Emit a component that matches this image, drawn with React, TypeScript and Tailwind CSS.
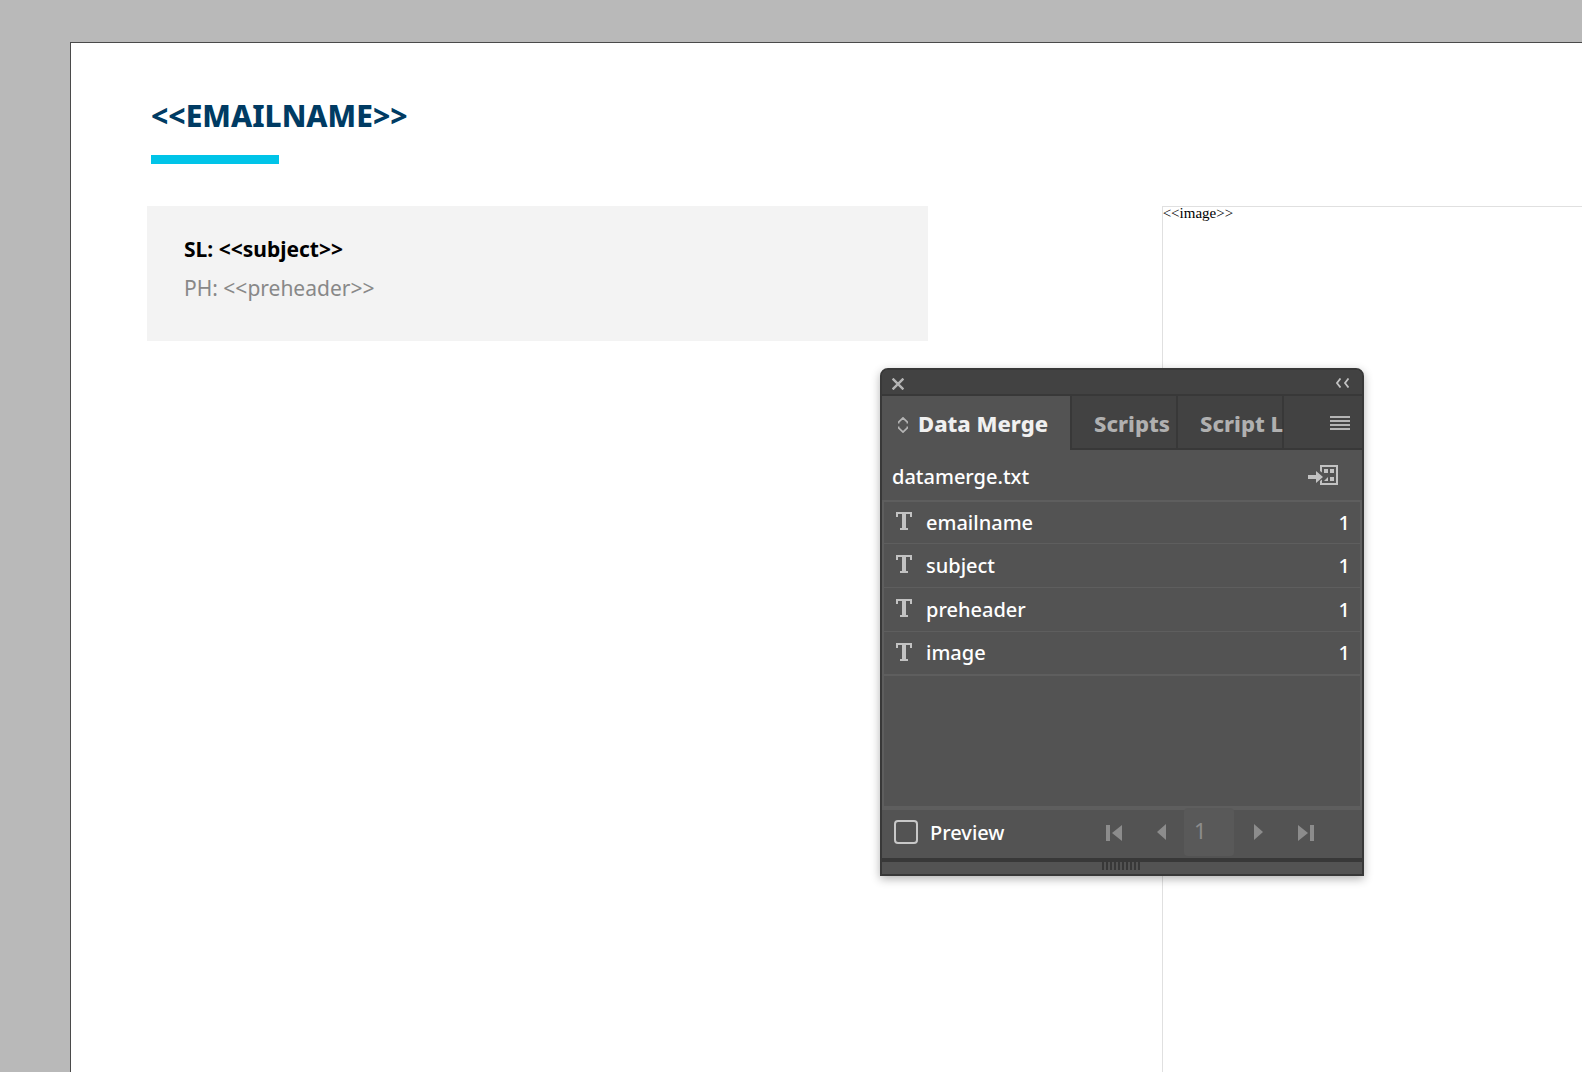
import { useState } from "react";
import clsx from "clsx";

const fields = [
  { name: "emailname", page: 1 },
  { name: "subject", page: 1 },
  { name: "preheader", page: 1 },
  { name: "image", page: 1 },
];

function TextIcon() {
  return (
    <svg width="16" height="18" viewBox="0 0 16 18" fill="#c2c2c2" aria-hidden>
      <path d="M0 0h16v5h-2V2h-4v14h2v2H4v-2h2V2H2v3H0z" />
    </svg>
  );
}

function SortIcon() {
  return (
    <svg
      width="10"
      height="16"
      viewBox="0 0 10 16"
      fill="none"
      stroke="#b4b4b4"
      strokeWidth="1.7"
      className="mt-1"
      aria-hidden
    >
      <path d="M.6 6.4V5.2L5 .9l4.400 4.300v1.200M.6 9.600v1.200L5 15.100l4.400-4.300V9.600" />
    </svg>
  );
}

function SourceIcon() {
  return (
    <svg width="30" height="20" viewBox="0 0 30 20" fill="#c2c2c2" aria-hidden>
      <path d="M0 10h8V6l7 6-7 6v-4H0z" />
      <path d="M12 0h18v20H12v-4l2-1.500V18h14V2H14v5.500L12 6z" />
      <path d="M16 4h4v4h-4zM22 4h4v4h-4zM22 12h4v4h-4zM20 12v4h-4z" />
    </svg>
  );
}

function NavButton({
  label,
  width,
  path,
}: {
  label: string;
  width: number;
  path: string;
}) {
  return (
    <button type="button" aria-label={label}>
      <svg
        width={width}
        height="18"
        viewBox={`0 0 ${width} 18`}
        fill="#8c8c8c"
        className="block"
      >
        <path d={path} />
      </svg>
    </button>
  );
}

function Tab({ label, active }: { label: string; active?: boolean }) {
  return (
    <button
      type="button"
      role="tab"
      aria-selected={!!active}
      className={clsx(
        "flex items-center whitespace-nowrap border-r-2 border-[#383838] text-[22px] font-extrabold",
        active
          ? "w-[190px] gap-2.5 bg-[#535353] pl-4 text-[#f0f0f0]"
          : "w-[106px] border-b-2 bg-[#424242] pl-[22px] pt-0.5 text-[#b0b0b0]"
      )}
    >
      {active && <SortIcon />}
      <span>{label}</span>
    </button>
  );
}

function DataMergePanel() {
  const [preview, setPreview] = useState(false);

  return (
    <section className="absolute left-[880px] top-[368px] flex w-[484px] flex-col overflow-hidden rounded-t-lg border-2 border-[#383838] bg-[#535353] font-['Noto_Sans',sans-serif] text-white shadow-[0_3px_10px_rgba(0,0,0,0.3)]">
      <div className="flex h-[26px] items-center justify-between border-b-2 border-[#383838] bg-[#424242] pl-2.5 pr-3">
        <button type="button" aria-label="Close">
          <svg
            width="12"
            height="12"
            viewBox="0 0 12 12"
            stroke="#b4b4b4"
            strokeWidth="2.400"
            className="mt-1 block"
          >
            <path d="M.6.6l10.800 10.800M11.400.6L.6 11.400" />
          </svg>
        </button>
        <button type="button" aria-label="Collapse">
          <svg
            width="14"
            height="10"
            viewBox="0 0 14 10"
            fill="none"
            stroke="#c2c2c2"
            strokeWidth="1.800"
            className="mt-0.5 block"
          >
            <path d="M4.500 .5L1 5l3.500 4.500M12.500 .5L9 5l3.500 4.500" />
          </svg>
        </button>
      </div>

      <div role="tablist" className="flex h-[54px]">
        <Tab label="Data Merge" active />
        <Tab label="Scripts" />
        <Tab label="Script L" />
        <div className="flex flex-1 items-center justify-end border-b-2 border-[#383838] bg-[#424242] pr-3 pt-0.5">
          <button type="button" aria-label="Panel menu">
            <svg
              width="20"
              height="14"
              viewBox="0 0 20 14"
              fill="#b4b4b4"
              className="block"
            >
              <path d="M0 0h20v2H0zM0 4h20v2H0zM0 8h20v2H0zM0 12h20v2H0z" />
            </svg>
          </button>
        </div>
      </div>

      <div className="flex h-[50px] items-center justify-between pl-2.5 pr-6 text-xl font-medium">
        <span className="pt-1">datamerge.txt</span>
        <button type="button" aria-label="Select data source">
          <SourceIcon />
        </button>
      </div>

      <div className="h-[310px] border-2 border-b-4 border-[#5e5e5e]">
        <table className="w-full text-xl font-medium">
          <tbody>
            {fields.map((field) => (
              <tr
                key={field.name}
                className="h-11 border-b border-[#5e5e5e] first:h-[41px] last:border-b-2"
              >
                <td className="w-[42px] pb-0.5 pl-3">
                  <TextIcon />
                </td>
                <td className="pt-px">{field.name}</td>
                <td className="pr-2.5 pt-px text-right">{field.page}</td>
              </tr>
            ))}
          </tbody>
        </table>
      </div>

      <div className="flex h-12 items-center pb-1">
        <label className="flex flex-1 items-center gap-3 pl-3 text-xl font-medium">
          <input
            type="checkbox"
            checked={preview}
            onChange={(e) => setPreview(e.target.checked)}
            className="size-6 appearance-none rounded border-2 border-[#c8c8c8] checked:bg-[#c8c8c8]"
          />
          <span className="pt-0.5">Preview</span>
        </label>
        <div className="flex items-center pr-12">
          <NavButton
            label="First record"
            width={16}
            path="M0 2h4v16H0zM16 2v16l-10-8z"
          />
          <div className="ml-[35px] mr-[18px] flex">
            <NavButton label="Previous record" width={9} path="M9 1v16L0 9z" />
          </div>
          <input
            type="text"
            aria-label="Record"
            defaultValue="1"
            className="-my-0.5 h-12 w-[50px] rounded bg-[#595959] pb-1 pl-2.5 text-[22px] text-[#8c8c8c]"
          />
          <div className="ml-5 mr-[35px] flex">
            <NavButton label="Next record" width={9} path="M0 1v16l9-8z" />
          </div>
          <NavButton
            label="Last record"
            width={16}
            path="M12 2h4v16h-4zM0 2v16l10-8z"
          />
        </div>
      </div>

      <div className="flex h-4 justify-center border-t-4 border-[#383838] pr-0.5">
        <svg width="38" height="8" viewBox="0 0 38 8" stroke="#383838" aria-hidden>
          <path d="M0 4h38" strokeWidth="8" strokeDasharray="2 2" />
        </svg>
      </div>
    </section>
  );
}

export default function App() {
  return (
    <div className="relative flex min-h-screen flex-col overflow-hidden bg-[#b9b9b9] pl-[70px] pt-[42px]">
      <main className="flex flex-1 flex-col border-l border-t border-[#4a4a4a] bg-white pl-[76px] font-['Noto_Sans',sans-serif]">
        <header className="pl-1 pt-[53px]">
          <h1 className="text-3xl leading-10 font-extrabold text-[#003b63]">
            &lt;&lt;EMAILNAME&gt;&gt;
          </h1>
          <div className="mt-[19px] h-[9px] w-32 bg-[#00c4e8]" />
        </header>
        <div className="mt-[42px] flex flex-1">
          <div className="h-[135px] w-[54.4%] bg-[#f3f3f3] pl-[37px] pt-6 text-[21px] leading-[39px]">
            <p className="font-bold text-black">SL: &lt;&lt;subject&gt;&gt;</p>
            <p className="text-[#888888]">PH: &lt;&lt;preheader&gt;&gt;</p>
          </div>
          <div className="ml-[234px] flex-1 border-l border-t border-[#e0e0e0] font-['Liberation_Serif',serif] text-[15px] leading-3 text-black">
            &lt;&lt;image&gt;&gt;
          </div>
        </div>
      </main>
      <DataMergePanel />
    </div>
  );
}
